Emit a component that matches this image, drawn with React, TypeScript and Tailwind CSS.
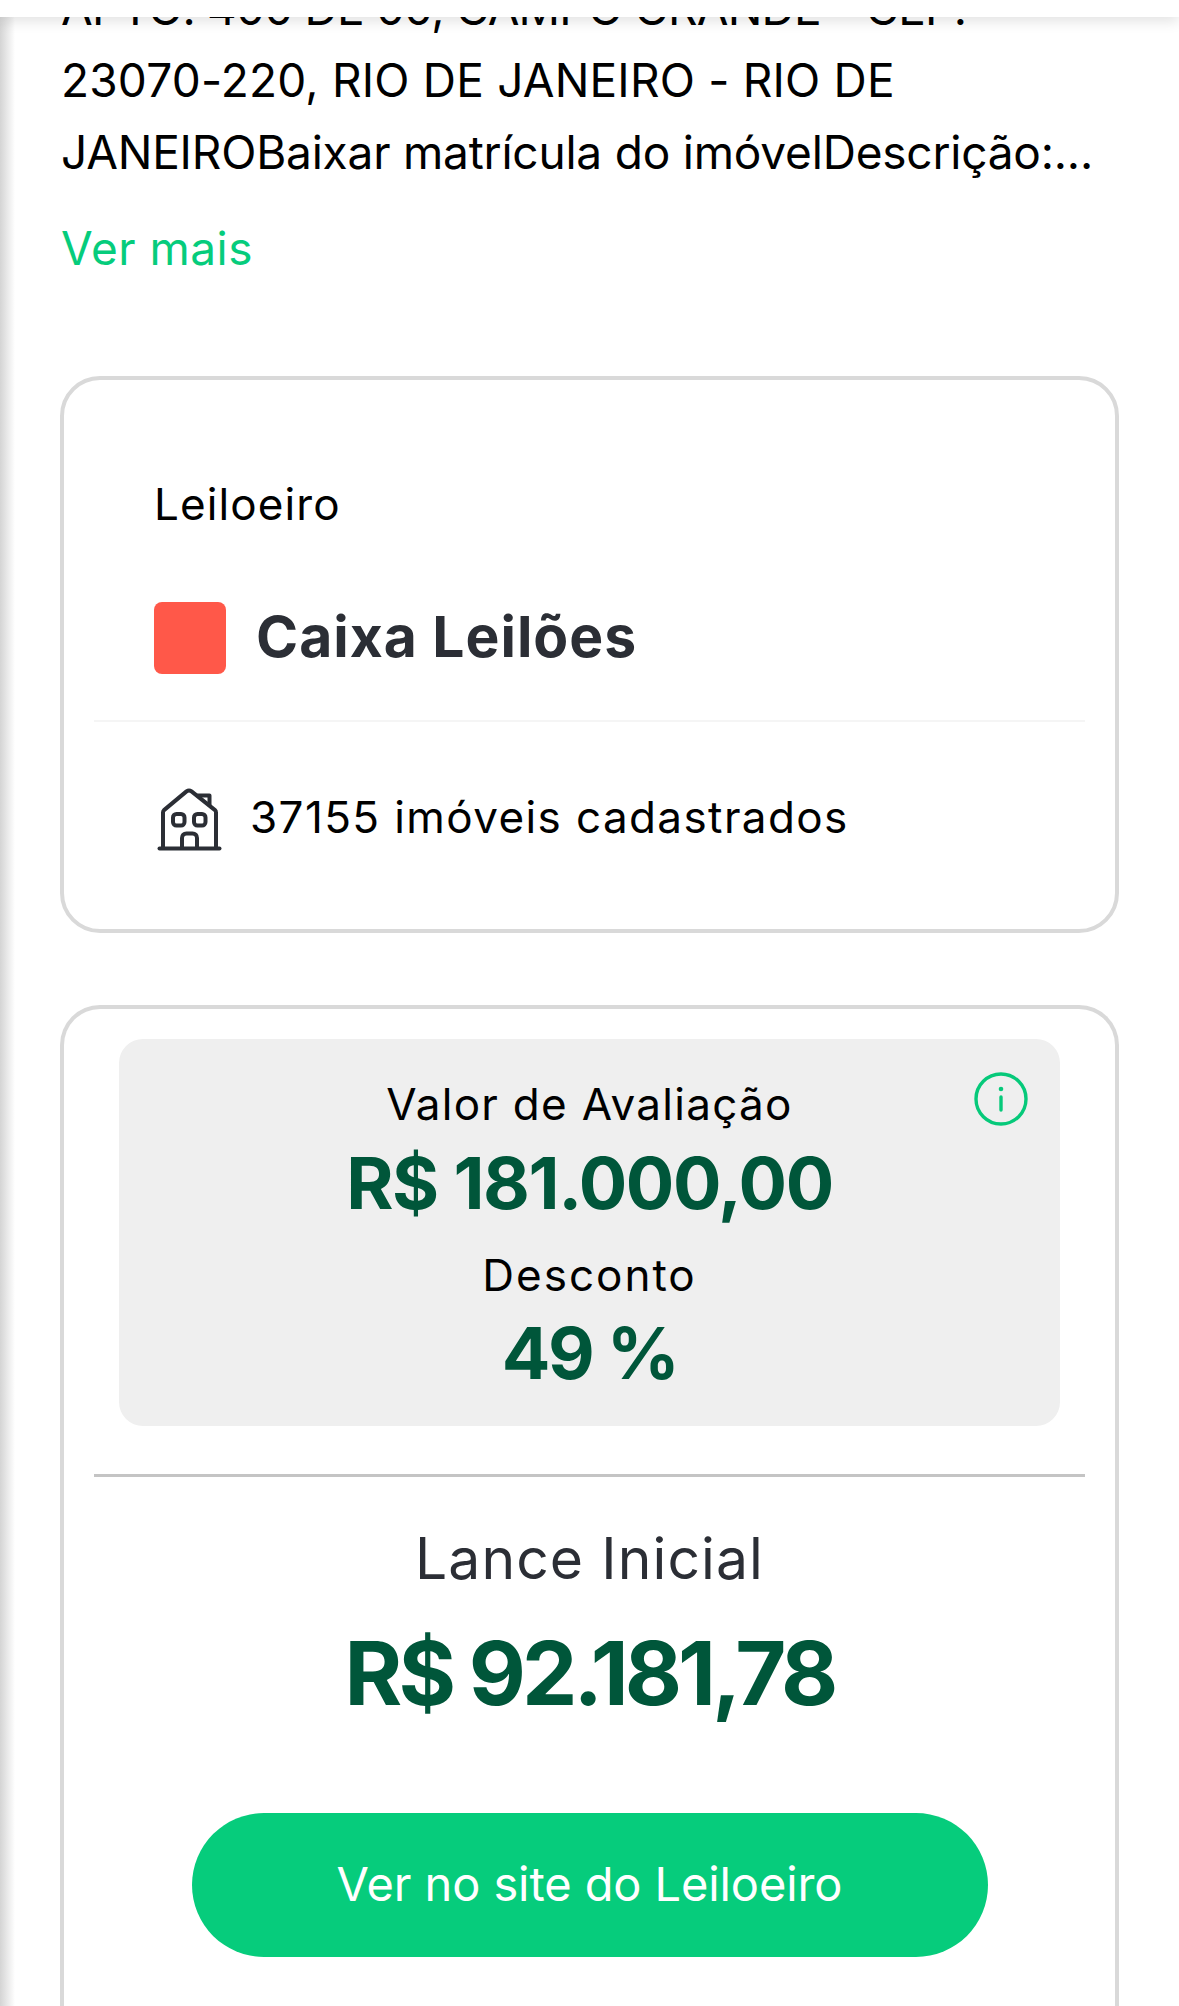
function HouseIcon() {
  return (
    <svg viewBox="0 0 65 63" className="h-[63px] w-[65px] shrink-0" fill="none" stroke="#2b2e35" strokeWidth="4" strokeLinecap="round" strokeLinejoin="round">
      <path d="M2.500 60.500h60" />
      <path d="M6 60V24.500c0-1 .4-1.800 1-2.400L29.500 3.400c1.600-1.200 3.400-1.200 5 0L58 22.100c.7.6 1 1.400 1 2.400V60" />
      <path d="M41 7.500h11.500V17" />
      <rect x="16" y="26" width="11.500" height="11.500" rx="3.500" />
      <rect x="37" y="26" width="11.500" height="11.500" rx="3.500" />
      <path d="M25 60V50c0-2.800 1.800-4.500 4.500-4.500h6c2.700 0 4.500 1.700 4.500 4.500v10" />
    </svg>
  );
}

function InfoIcon() {
  return (
    <svg viewBox="0 0 54 54" className="h-[54px] w-[54px]" fill="none" stroke="#06c97a" strokeWidth="3.400" strokeLinecap="round">
      <circle cx="27" cy="27" r="25" />
      <path d="M27 25v13" />
      <circle cx="27" cy="17" r="2.300" fill="#06c97a" stroke="none" />
    </svg>
  );
}

export default function App() {
  return (
    <div className="relative h-[2006px] w-full overflow-hidden bg-white font-['Inter',sans-serif] text-black">
      {/* Top bar */}
      <div className="absolute inset-x-0 top-0 z-20 h-[17px] bg-white shadow-[0_4px_14px_rgba(0,0,0,0.12)]" />
      {/* Left edge shadow */}
      <div className="absolute inset-y-0 left-0 z-10 w-[15px] bg-gradient-to-r from-[#d4d4d4] to-white" />

      <div className="mt-[-28px] px-[60px]">
        {/* Description */}
        <div className="pl-[1px] text-[46px] leading-[72px] whitespace-nowrap">
          <p className="tracking-[-0.8px]">APTO: 400 DE 00, CAMPO GRANDE - CEP:</p>
          <p className="tracking-[0.2px]">23070-220, RIO DE JANEIRO - RIO DE</p>
          <p className="tracking-[-0.2px]">JANEIROBaixar matrícula do imóvelDescrição:...</p>
        </div>
        <p className="mt-[24px] pl-[1px] text-[46px] leading-[72px] tracking-[0.5px] text-[#06cc7c]">Ver mais</p>

        {/* Leiloeiro card */}
        <div className="mt-[92px] rounded-[40px] border-4 border-[#d9d9d9] px-[30px] pt-[96px] pb-[78px]">
          <p className="pl-[60px] text-[44px] leading-[56px] tracking-[1.1px]">Leiloeiro</p>
          <div className="mt-[70px] flex items-center gap-[30px] pl-[60px]">
            <div className="h-[72px] w-[72px] rounded-[8px] bg-[#ff5849]" />
            <span className="mt-[-2px] text-[57px] leading-[72px] font-bold tracking-[1px] text-[#2b2e35]">Caixa Leilões</span>
          </div>
          <div className="mt-[46px] h-[2px] bg-[#f5f5f5]" />
          <div className="mt-[66px] flex items-start gap-[28px] pl-[63px]">
            <HouseIcon />
            <span className="mt-[1px] text-[44px] leading-[56px] tracking-[1.4px]">37155 imóveis cadastrados</span>
          </div>
        </div>

        {/* Valores card */}
        <div className="mt-[72px] rounded-t-[40px] border-x-4 border-t-4 border-[#d9d9d9] px-[30px] pt-[30px] pb-[200px]">
          <div className="relative mx-[25px] rounded-[24px] bg-[#efefef] pt-[37px] pb-[33px] text-center">
            <div className="absolute top-[33px] right-[32px]">
              <InfoIcon />
            </div>
            <p className="text-[44px] leading-[56px] tracking-[1.3px]">Valor de Avaliação</p>
            <p className="mt-[11px] text-[72px] leading-[80px] font-bold tracking-[-1.4px] text-[#00563a]">R$ 181.000,00</p>
            <p className="mt-[24px] text-[44px] leading-[56px] tracking-[2px]">Desconto</p>
            <p className="mt-[10px] text-[72px] leading-[80px] font-bold tracking-[-2.500px] text-[#00563a]">49 %</p>
          </div>
          <div className="mt-[48px] h-[3px] bg-[#c4c4c4]" />
          <p className="mt-[47px] text-center text-[57px] leading-[70px] tracking-[1.1px] text-[#2b2e35]">Lance Inicial</p>
          <p className="mt-[29px] text-center text-[88px] leading-[100px] font-bold tracking-[-4px] text-[#00563a]">R$ 92.181,78</p>
          <button className="mx-auto mt-[90px] flex h-[144px] w-[796px] items-center justify-center rounded-full bg-[#06cc7c] pb-[2px] text-[47px] tracking-[-0.1px] text-white">
            Ver no site do Leiloeiro
          </button>
        </div>
      </div>
    </div>
  );
}
